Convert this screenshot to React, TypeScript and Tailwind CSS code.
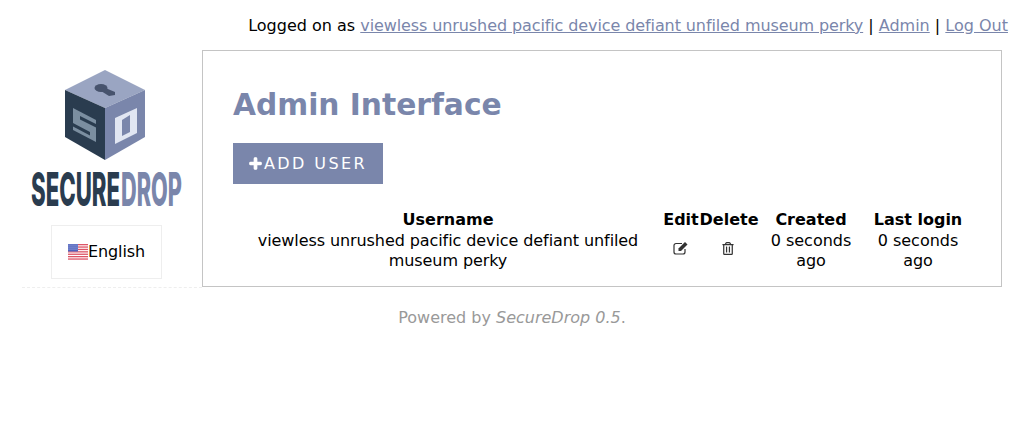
import { FaPlus, FaRegTrashAlt } from "react-icons/fa";

const font = { fontFamily: '"DejaVu Sans", sans-serif' };

function Logo() {
  return (
    <svg width="152" height="138" viewBox="0 0 152 138" className="mr-px block">
      <polygon points="75,0 115,20 75,38 35,20" fill="#9aa5c2" />
      <polygon points="35,20 75,38 75,90 35,67" fill="#2a3c4f" />
      <polygon points="115,20 75,38 75,90 115,67" fill="#7a86ab" />
      <ellipse cx="71" cy="18" rx="6.5" ry="4" fill="#47536d" />
      <polygon points="73,17 85,22 85,25 79,26 71,21" fill="#47536d" />
      <polygon points="43,38 66,50 66,72 43,60" fill="#7b8ea0" />
      <polygon points="50,46 66,54 66,57.5 50,49.5" fill="#2a3c4f" />
      <polygon points="43,53 60,62 60,65.5 43,56.5" fill="#2a3c4f" />
      <polygon points="85,48 107,38 107,63 85,74" fill="#e1e6f2" />
      <polygon points="92,50 100,45 100,62 92,66" fill="#7a86ab" />
      <text transform="translate(1,135.5) scale(0.5,1)" fontFamily="Inter" fontWeight="800" fontSize="46" textLength="178" lengthAdjust="spacingAndGlyphs" fill="#2a3c4f">SECURE</text>
      <text transform="translate(91,135.5) scale(0.5,1)" fontFamily="Inter" fontWeight="800" fontSize="46" textLength="122" lengthAdjust="spacingAndGlyphs" fill="#7a86ab">DROP</text>
    </svg>
  );
}

function Flag() {
  const dots = [1, 3, 5, 7, 9].flatMap((x) => [1, 3, 5].map((y) => [x, y]));
  return (
    <svg width="20" height="16" viewBox="0 0 20 16" className="block">
      <rect width="20" height="16" fill="#fff" />
      {[0, 2.4, 4.8, 7.2, 9.6, 12, 14.4].map((y) => (
        <rect key={y} y={y} width="20" height="1.3" fill="#dd5567" />
      ))}
      <rect width="10" height="7.5" fill="#4f62bd" />
      {dots.map(([x, y]) => (
        <circle key={`${x}-${y}`} cx={x} cy={y} r="0.5" fill="#dfe4f7" />
      ))}
    </svg>
  );
}

function EditIcon() {
  return (
    <svg width="16" height="14" viewBox="0 0 16 14" className="ml-[10px] block text-[#333]">
      <path d="M9 2.5H3a2 2 0 0 0-2 2V11a2 2 0 0 0 2 2h7a2 2 0 0 0 2-2V8" fill="none" stroke="currentColor" strokeWidth="1.2" />
      <path d="M5.5 7.5 12 1l2.5 2.5L8 10H5.5Z" fill="currentColor" />
    </svg>
  );
}

export default function App() {
  return (
    <div className="h-[429px] w-[1024px] bg-white text-base text-black" style={font}>
      <div className="flex h-[50px] items-start justify-end pr-4 pt-4 leading-5">
        <span>
          Logged on as{" "}
          <a className="tracking-[-0.1px] text-[#7a86ab] underline" href="#">
            viewless unrushed pacific device defiant unfiled museum perky
          </a>{" "}
          |{" "}
          <a className="text-[#7a86ab] underline" href="#">
            Admin
          </a>{" "}
          |{" "}
          <a className="text-[#7a86ab] underline" href="#">
            Log Out
          </a>
        </span>
      </div>
      <div className="ml-[22px] flex items-stretch">
        <div className="flex h-[238px] w-[180px] flex-col items-center border-b border-dashed border-[#eeeeee] pr-[11px] pt-5">
          <Logo />
          <div className="mt-[17px] flex h-[54px] w-[111px] items-center justify-center border border-[#eeeeee]">
            <Flag />
            <span className="tracking-[-0.1px]">English</span>
          </div>
        </div>
        <div className="h-[237px] w-[800px] border border-[#c4c4c4] px-[30px] pt-[34px]">
          <h1 className="text-[29.7px] font-bold leading-[40px] text-[#7a86ab]">Admin Interface</h1>
          <button className="mt-[18px] flex h-[41px] w-[150px] items-center bg-[#7a86ab] pl-4 text-base tracking-[2.4px] text-white">
            <FaPlus className="mr-[2px] h-[13px] w-[13px]" strokeWidth={50} />
            ADD USER
          </button>
          <table className="mt-[26px] w-[740px] table-fixed border-collapse text-center leading-5">
            <thead>
              <tr>
                <th className="w-[430px] px-0 font-bold">Username</th>
                <th className="w-[36px] px-0 font-bold">Edit</th>
                <th className="w-[60px] px-0 font-bold">Delete</th>
                <th className="w-[104px] px-0 font-bold">Created</th>
                <th className="w-[110px] px-0 font-bold">Last login</th>
              </tr>
            </thead>
            <tbody>
              <tr>
                <td className="px-2 pt-px align-top tracking-[-0.085px]">viewless unrushed pacific device defiant unfiled museum perky</td>
                <td className="pb-[5px] align-middle">
                  <EditIcon />
                </td>
                <td className="pb-[5px] align-middle">
                  <FaRegTrashAlt className="ml-[23px] h-[13px] w-[12px] text-[#333]" />
                </td>
                <td className="px-2 pt-px align-top">0 seconds ago</td>
                <td className="px-2 pt-px align-top">0 seconds ago</td>
              </tr>
            </tbody>
          </table>
        </div>
      </div>
      <p className="mt-[20px] text-center leading-5 text-[#999999]">
        Powered by <em>SecureDrop 0.5</em>.
      </p>
    </div>
  );
}
